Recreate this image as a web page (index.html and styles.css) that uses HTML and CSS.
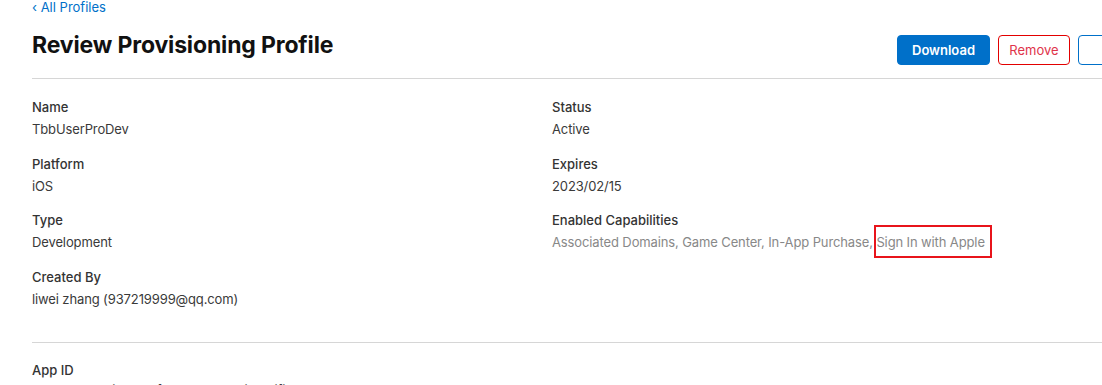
FILE: index.html
```html
<!DOCTYPE html>
<html lang="en">
<head>
    <meta charset="UTF-8">
    <meta name="viewport" content="width=device-width, initial-scale=1.0">
    <title>Review Provisioning Profile</title>
    <link rel="stylesheet" href="styles.css">
</head>
<body>
    <div class="page">
        <a class="back-link" href="#">&lsaquo; All Profiles</a>

        <div class="page-header">
            <h1>Review Provisioning Profile</h1>
            <div class="actions">
                <button class="btn btn-primary">Download</button>
                <button class="btn btn-danger">Remove</button>
                <button class="btn btn-outline">Edit</button>
            </div>
        </div>

        <div class="details">
            <div class="column">
                <div class="field">
                    <div class="label">Name</div>
                    <div class="value">TbbUserProDev</div>
                </div>
                <div class="field">
                    <div class="label">Platform</div>
                    <div class="value">iOS</div>
                </div>
                <div class="field">
                    <div class="label">Type</div>
                    <div class="value">Development</div>
                </div>
                <div class="field">
                    <div class="label">Created By</div>
                    <div class="value">liwei zhang (937219999@qq.com)</div>
                </div>
            </div>
            <div class="column">
                <div class="field">
                    <div class="label">Status</div>
                    <div class="value">Active</div>
                </div>
                <div class="field">
                    <div class="label">Expires</div>
                    <div class="value">2023/02/15</div>
                </div>
                <div class="field">
                    <div class="label">Enabled Capabilities</div>
                    <div class="value muted">Associated Domains, Game Center, In-App Purchase, <span class="marked">Sign In with Apple</span></div>
                </div>
            </div>
        </div>

        <div class="section">
            <div class="label">App ID</div>
            <div class="value tight">Generate a wildcard for the bundle identifier <a href="#">TbbUserPro (com.tbb.userpro)</a></div>
        </div>
    </div>
</body>
</html>
```

FILE: styles.css
```css
body {
    font-family: Inter, "Noto Sans", Arial, sans-serif;
    margin: 0;
    color: #333;
    background-color: #fff;
    overflow: hidden; /* page is wider than the window */
}

.page {
    width: 1116px;
    padding-left: 32px;
}

.back-link {
    display: block;
    font-size: 13px;
    line-height: 14px;
    color: #0070c9;
    text-decoration: none;
}

.page-header {
    display: flex;
    align-items: flex-start;
    padding: 17px 0 13px;
    border-bottom: 1px solid #d6d6d6;
}

.page-header h1 {
    margin: 0;
    font-size: 23px;
    line-height: 28px;
    font-weight: 700;
    color: #111;
    letter-spacing: -0.15px;
}

.actions {
    margin-left: auto;
    margin-top: 4px;
    display: flex;
    gap: 8px;
}

.btn {
    font-family: inherit;
    font-size: 13px;
    height: 30px;
    padding: 0;
    border-radius: 4px;
    background: #fff;
    cursor: pointer;
}

.btn-primary {
    background-color: #0070c9;
    border: 1px solid #0070c9;
    color: #fff;
    font-weight: 600;
    width: 93px;
}

.btn-danger {
    border: 1px solid #e30000;
    color: #e0344a;
    width: 72px;
}

.btn-outline {
    border: 1px solid #0070c9;
    color: #0070c9;
    width: 70px;
}

.details {
    display: grid;
    grid-template-columns: 520px 1fr;
    padding: 19px 0 18px;
    border-bottom: 1px solid #d6d6d6;
}

.field {
    margin-bottom: 16.5px;
}

.label {
    font-size: 13px;
    font-weight: 500;
    line-height: 18px;
    color: #333;
}

.value {
    font-size: 13px;
    line-height: 18px;
    margin-top: 4px;
    color: #3a3a3a;
    letter-spacing: -0.12px;
}

.value.muted {
    color: #888;
}

.value.tight {
    margin-top: 2px;
}

.value a {
    color: #0070c9;
    text-decoration: none;
}

/* red annotation box round the last capability */
.marked {
    position: relative;
}

.marked::after {
    content: "";
    position: absolute;
    left: -2px;
    right: -7px;
    top: -9px;
    bottom: -8px;
    border: 2px solid #e8141b;
}

.section {
    padding-top: 18px;
}
```
